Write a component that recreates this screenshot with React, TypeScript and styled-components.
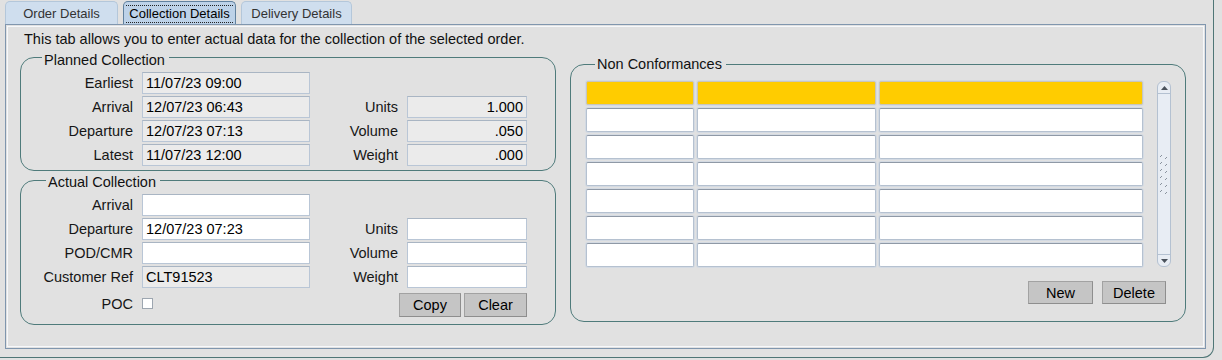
import React from 'react'
import styled, { createGlobalStyle } from 'styled-components'

const GlobalStyle = createGlobalStyle`
    html, body {
        margin: 0;
        padding: 0;
        background: #e1e1e1;
        overflow: hidden;
    }
    body {
        font-family: "Liberation Sans", Arial, sans-serif;
        font-size: 14.5px;
        color: #111;
    }
`;

const Screen = styled.div`
    width: 1222px;
    height: 360px;
    overflow: hidden;
    background: #e1e1e1;
`;

const Window = styled.div`
    box-sizing: border-box;
    width: 1224px;
    height: 358px;
    margin-left: -10px;
    padding: 0 7px 0 14px;
    border: 1px solid #4f7676;
    border-top: none;
    border-radius: 0 0 11px 11px;
    display: flex;
    flex-direction: column;
`;

const TabStrip = styled.div`
    display: flex;
    gap: 5px;
    height: 24px;
    align-items: flex-end;
`;

const Tab = styled.div<{ $active?: boolean; $width: number }>`
    box-sizing: border-box;
    width: ${p => p.$width}px;
    height: 23px;
    display: flex;
    align-items: center;
    justify-content: center;
    padding-top: 1px;
    font-size: 13px;
    color: ${p => p.$active ? '#000' : '#333'};
    background: ${p => p.$active ? '#bdd2e8' : '#cfdeee'};
    border: 1px solid ${p => p.$active ? '#62829f' : '#b4c7da'};
    border-bottom: none;
    border-radius: 5px 5px 0 0;
`;

const FocusText = styled.span`
    line-height: 16px;
    padding: 0 3px;
    border-top: 1px dotted #222;
    border-bottom: 1px dotted #222;
`;

const Panel = styled.div`
    box-sizing: border-box;
    height: 325px;
    border: 1px solid #8096ae;
    box-shadow: inset 0 0 0 1px #e1e1e1, inset 0 0 0 2px #f6f8fb;
    padding: 6px 0 0 14px;
`;

const Intro = styled.div`
    line-height: 16px;
    height: 16px;
    margin-left: 4px;
`;

const Body = styled.div`
    display: flex;
    gap: 14px;
    align-items: flex-start;
`;

const LeftColumn = styled.div`
    width: 536px;
    display: flex;
    flex-direction: column;
`;

const RightColumn = styled.div`
    width: 616px;
    margin-top: 9px;
`;

const Group = styled.fieldset<{ $pad: string }>`
    margin: 0;
    min-width: 0;
    padding: ${p => p.$pad};
    border: 1px solid #4f7b7b;
    border-radius: 14px;
`;

const Legend = styled.legend<{ $offset: number; $top: number }>`
    margin-left: ${p => p.$offset}px;
    padding: ${p => p.$top}px 4px 0 2px;
    line-height: 16px;
    font-size: 14.5px;
    color: #111;
`;

const FormGrid = styled.div<{ $rows: string }>`
    display: grid;
    grid-template-columns: 109px 168px 79px 120px;
    grid-template-rows: ${p => p.$rows};
    column-gap: 9px;
    row-gap: 2px;
    align-items: center;
`;

const Label = styled.span`
    text-align: right;
    white-space: nowrap;
    color: #161616;
`;

const Spacer = styled.span`
    grid-column: span 2;
`;

const Field = styled.div<{ $readOnly?: boolean; $right?: boolean }>`
    box-sizing: border-box;
    height: 22px;
    padding: 0 3px;
    line-height: 20px;
    white-space: nowrap;
    text-align: ${p => p.$right ? 'right' : 'left'};
    background: ${p => p.$readOnly ? '#ebebeb' : '#fff'};
    border: 1px solid #b9c6d6;
    border-top-color: #a9b5c3;
    color: #000;
`;

const CheckBox = styled.span`
    box-sizing: border-box;
    width: 11px;
    height: 11px;
    background: #fff;
    border: 1px solid #9da6b0;
`;

const ButtonBar = styled.div<{ $gap: number; $span?: boolean }>`
    display: flex;
    justify-content: flex-end;
    gap: ${p => p.$gap}px;
    align-self: end;
    ${p => p.$span ? 'grid-column: span 2;' : ''}
`;

const Button = styled.div<{ $width: number; $height: number }>`
    box-sizing: border-box;
    width: ${p => p.$width}px;
    height: ${p => p.$height}px;
    display: flex;
    align-items: center;
    justify-content: center;
    background: #c5c5c5;
    border: 1px solid #a2a2a2;
    border-right-color: #8e8e8e;
    border-bottom-color: #8e8e8e;
    color: #000;
`;

const TableArea = styled.div`
    display: flex;
    gap: 14px;
`;

const Table = styled.div`
    display: grid;
    grid-template-columns: 108px 179px 264px;
    grid-auto-rows: 24px;
    gap: 3px;
`;

const Cell = styled.div<{ $head?: boolean }>`
    box-sizing: border-box;
    border-radius: 2px;
    background: ${p => p.$head ? '#ffcc00' : '#fff'};
    border: 1px solid ${p => p.$head ? '#c9c6bb' : '#b5c1d0'};
    border-top-color: ${p => p.$head ? '#c9c6bb' : '#8f99a6'};
    box-shadow: 0 0 0 1px #d3dae3;
`;

const ScrollBar = styled.div`
    box-sizing: border-box;
    width: 14px;
    height: 186px;
    display: flex;
    flex-direction: column;
    background: #e8edf4;
    border: 1px solid #b4c1d1;
    border-radius: 6px;
`;

const ScrollButton = styled.div<{ $down?: boolean }>`
    height: 11px;
    display: flex;
    align-items: center;
    justify-content: center;
    ${p => p.$down ? 'border-top: 1px solid #b4c1d1;' : 'border-bottom: 1px solid #b4c1d1;'}
`;

const ScrollTrack = styled.div`
    flex: 1;
    display: flex;
    align-items: center;
    justify-content: center;
`;

const Arrow = ({ down }: { down?: boolean }) => (
    <svg width="7" height="4" viewBox="0 0 7 4">
        <path d={down ? 'M0 0 L7 0 L3.5 4 Z' : 'M0 4 L7 4 L3.5 0 Z'} fill="#4a525c" />
    </svg>
)

const Grip = () => (
    <svg width="10" height="44" viewBox="0 0 10 44">
        {[0, 1, 2, 3, 4, 5].map(i => (
            <g key={i} stroke="#8a939e" strokeWidth="1">
                <line x1="1" y1={i * 7 + 5} x2="3" y2={i * 7 + 3} />
                <line x1="6" y1={i * 7 + 7} x2="8" y2={i * 7 + 5} />
            </g>
        ))}
    </svg>
)

const rows = [0, 1, 2, 3, 4, 5, 6]

const App: React.FC = () => {
    return (
        <Screen>
            <GlobalStyle />
            <Window>
                <TabStrip>
                    <Tab $width={113}>Order Details</Tab>
                    <Tab $width={113} $active><FocusText>Collection Details</FocusText></Tab>
                    <Tab $width={111}>Delivery Details</Tab>
                </TabStrip>
                <Panel>
                    <Intro>This tab allows you to enter actual data for the collection of the selected order.</Intro>
                    <Body>
                        <LeftColumn>
                            <Group $pad="4px 0 4px 3px">
                                <Legend $offset={18} $top={5}>Planned Collection</Legend>
                                <FormGrid $rows="repeat(4, 22px)">
                                    <Label>Earliest</Label>
                                    <Field $readOnly>11/07/23 09:00</Field>
                                    <Spacer />
                                    <Label>Arrival</Label>
                                    <Field $readOnly>12/07/23 06:43</Field>
                                    <Label>Units</Label>
                                    <Field $readOnly $right>1.000</Field>
                                    <Label>Departure</Label>
                                    <Field $readOnly>12/07/23 07:13</Field>
                                    <Label>Volume</Label>
                                    <Field $readOnly $right>.050</Field>
                                    <Label>Latest</Label>
                                    <Field $readOnly>11/07/23 12:00</Field>
                                    <Label>Weight</Label>
                                    <Field $readOnly $right>.000</Field>
                                </FormGrid>
                            </Group>
                            <Group $pad="4px 0 7px 3px">
                                <Legend $offset={22} $top={3}>Actual Collection</Legend>
                                <FormGrid $rows="repeat(4, 22px) 27px">
                                    <Label>Arrival</Label>
                                    <Field />
                                    <Spacer />
                                    <Label>Departure</Label>
                                    <Field>12/07/23 07:23</Field>
                                    <Label>Units</Label>
                                    <Field />
                                    <Label>POD/CMR</Label>
                                    <Field />
                                    <Label>Volume</Label>
                                    <Field />
                                    <Label>Customer Ref</Label>
                                    <Field $readOnly>CLT91523</Field>
                                    <Label>Weight</Label>
                                    <Field />
                                    <Label>POC</Label>
                                    <CheckBox />
                                    <ButtonBar $gap={3} $span>
                                        <Button $width={62} $height={24}>Copy</Button>
                                        <Button $width={63} $height={24}>Clear</Button>
                                    </ButtonBar>
                                </FormGrid>
                            </Group>
                        </LeftColumn>
                        <RightColumn>
                            <Group $pad="9px 13px 17px 15px">
                                <Legend $offset={9} $top={0}>Non Conformances</Legend>
                                <TableArea>
                                    <Table>
                                        {rows.map(r => (
                                            <React.Fragment key={r}>
                                                <Cell $head={r === 0} />
                                                <Cell $head={r === 0} />
                                                <Cell $head={r === 0} />
                                            </React.Fragment>
                                        ))}
                                    </Table>
                                    <ScrollBar>
                                        <ScrollButton><Arrow /></ScrollButton>
                                        <ScrollTrack><Grip /></ScrollTrack>
                                        <ScrollButton $down><Arrow down /></ScrollButton>
                                    </ScrollBar>
                                </TableArea>
                                <ButtonBar $gap={9} style={{ marginTop: 14, paddingRight: 6 }}>
                                    <Button $width={65} $height={23}>New</Button>
                                    <Button $width={64} $height={23}>Delete</Button>
                                </ButtonBar>
                            </Group>
                        </RightColumn>
                    </Body>
                </Panel>
            </Window>
        </Screen>
    )
}

export default App
